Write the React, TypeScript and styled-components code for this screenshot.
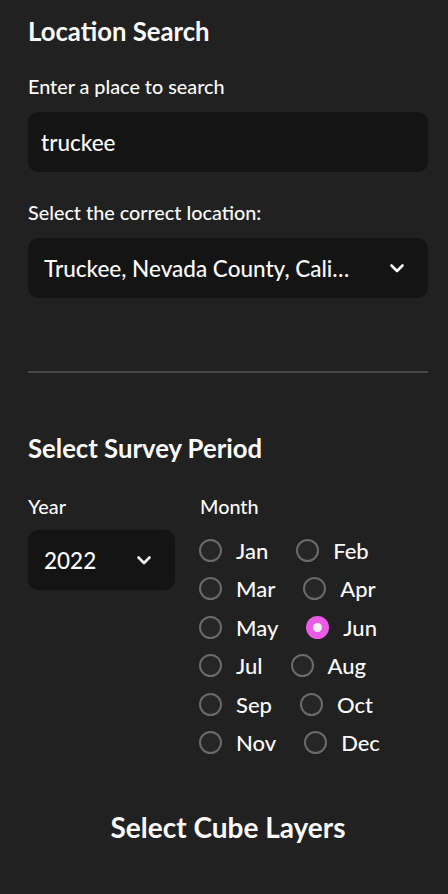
import React from "react";
import styled, { createGlobalStyle } from "styled-components";

const Global = createGlobalStyle`
  html, body { margin: 0; padding: 0; background: #212121; }
  body { font-family: "Source Sans Pro", Lato, "Noto Sans", sans-serif; color: #fafafa; }
`;

const Sidebar = styled.div`
  width: 448px;
  height: 894px;
  box-sizing: border-box;
  padding: 14px 20px 0 28px;
  background: #212121;
  overflow: hidden;
  display: flex;
  flex-direction: column;
`;

const Heading = styled.h2<{ $center?: boolean; $size?: number }>`
  margin: 0;
  font-size: ${(p) => p.$size ?? 25.7}px;
  line-height: 34px;
  font-weight: 700;
  color: #fafafa;
  text-align: ${(p) => (p.$center ? "center" : "left")};
`;

const Label = styled.div<{ $mb?: number }>`
  font-size: 19.8px;
  line-height: 24px;
  font-weight: 500;
  color: #fafafa;
  margin-bottom: ${(p) => p.$mb ?? 14}px;
`;

const Field = styled.div<{ $mt: number }>`
  margin-top: ${(p) => p.$mt}px;
  display: flex;
  flex-direction: column;
`;

const Input = styled.div`
  height: 60px;
  border-radius: 10px;
  background: #141414;
  display: flex;
  align-items: center;
  padding: 0 13px;
  font-size: 22.5px;
  font-weight: 500;
  color: #fafafa;
`;

const Select = styled.div<{ $w?: number }>`
  height: 60px;
  width: ${(p) => (p.$w ? `${p.$w}px` : "auto")};
  box-sizing: border-box;
  border-radius: 10px;
  background: #141414;
  display: flex;
  align-items: center;
  justify-content: space-between;
  padding: 0 23px 0 16px;
  font-size: 22.5px;
  font-weight: 500;
  color: #fafafa;
`;

const SelectText = styled.span`
  white-space: nowrap;
  overflow: hidden;
  text-overflow: ellipsis;
`;

const Divider = styled.hr`
  margin: 73px 0 0;
  border: none;
  height: 2px;
  background: #474747;
`;

const Row = styled.div`
  display: flex;
  margin-top: 29px;
`;

const YearCol = styled.div`
  width: 172px;
  display: flex;
  flex-direction: column;
`;

const MonthCol = styled.div`
  flex: 1;
  display: flex;
  flex-direction: column;
`;

const RadioWrap = styled.div`
  display: flex;
  flex-wrap: wrap;
  margin-top: -1px;
  margin-left: -1px;
`;

const RadioItem = styled.div`
  display: flex;
  align-items: center;
  height: 38.5px;
  margin-right: 28px;
  font-size: 22px;
  font-weight: 500;
  color: #fafafa;
`;

const Circle = styled.span<{ $on?: boolean }>`
  width: 23px;
  height: 23px;
  box-sizing: border-box;
  border-radius: 50%;
  margin-right: 14px;
  display: flex;
  align-items: center;
  justify-content: center;
  background: ${(p) => (p.$on ? "#ea5ce5" : "#262626")};
  border: ${(p) => (p.$on ? "none" : "2px solid #6a6a6a")};
`;

const Dot = styled.span`
  width: 9px;
  height: 9px;
  border-radius: 50%;
  background: #f0f0f0;
`;

const Chevron = () => (
  <svg width="16" height="12" viewBox="0 0 16 12" fill="none">
    <path d="M2.5 3.5 L8 9 L13.5 3.5" stroke="#fafafa" strokeWidth="2.6" strokeLinecap="round" strokeLinejoin="round" />
  </svg>
);

const months = ["Jan", "Feb", "Mar", "Apr", "May", "Jun", "Jul", "Aug", "Sep", "Oct", "Nov", "Dec"];

export default function App() {
  return (
    <>
      <Global />
      <Sidebar>
        <Heading>Location Search</Heading>
        <Field $mt={26}>
          <Label>Enter a place to search</Label>
          <Input>truckee</Input>
        </Field>
        <Field $mt={28}>
          <Label>Select the correct location:</Label>
          <Select>
            <SelectText>Truckee, Nevada County, Cali…</SelectText>
            <Chevron />
          </Select>
        </Field>
        <Divider />
        <Field $mt={58}>
          <Heading>Select Survey Period</Heading>
        </Field>
        <Row>
          <YearCol>
            <Label $mb={12}>Year</Label>
            <Select $w={147}>
              <SelectText>2022</SelectText>
              <Chevron />
            </Select>
          </YearCol>
          <MonthCol>
            <Label>Month</Label>
            <RadioWrap>
              {months.map((m) => (
                <RadioItem key={m}>
                  <Circle $on={m === "Jun"}>{m === "Jun" && <Dot />}</Circle>
                  {m}
                </RadioItem>
              ))}
            </RadioWrap>
          </MonthCol>
        </Row>
        <Field $mt={48}>
          <Heading $center $size={28}>Select Cube Layers</Heading>
        </Field>
      </Sidebar>
    </>
  );
}
